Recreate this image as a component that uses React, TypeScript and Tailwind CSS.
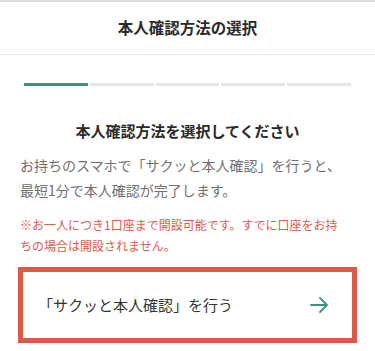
const steps = [true, false, false, false, false];

export default function App() {
  return (
    <div
      className="w-full min-h-[351px] bg-white border-t-2 border-[#dedede] text-[#333]"
      style={{ fontFamily: '"Noto Sans CJK JP", "Noto Sans", sans-serif' }}
    >
      {/* Header */}
      <header className="h-[53px] flex items-center justify-center border-b border-[#ececec]">
        <h1 className="text-[15.5px] font-bold leading-none text-[#2a2a2a]">本人確認方法の選択</h1>
      </header>

      {/* Progress */}
      <div className="px-[24px] pt-[28px] flex gap-[2px]">
        {steps.map((done, i) => (
          <div key={i} className={`flex-1 h-[3px] ${done ? "bg-[#3f8f7e]" : "bg-[#e6e6e6]"}`} />
        ))}
      </div>

      {/* Content */}
      <section className="px-5">
        <h2 className="mt-[33px] text-center text-[15px] font-bold leading-[24px] text-[#2a2a2a]">
          本人確認方法を選択してください
        </h2>
        <p className="mt-[10px] text-[14px] leading-[25px] text-[#707070]">
          お持ちのスマホで「サクッと本人確認」を行うと、
          <br />
          最短1分で本人確認が完了します。
        </p>
        <p className="mt-[11px] text-[12px] leading-[21px] text-[#e0594c]">
          ※お一人につき1口座まで開設可能です。すでに口座をお持
          <br />
          ちの場合は開設されません。
        </p>
      </section>

      <button className="mx-[18px] mt-[11px] w-[339px] h-[76px] border-[5px] border-[#dc5a48] flex items-center pl-[15px] pr-[24px] text-left">
        <span className="flex-1 text-[15px] text-[#333]">「サクッと本人確認」を行う</span>
        <svg width="18" height="16" viewBox="0 0 18 16" fill="none" stroke="#3f9280" strokeWidth="1.8" strokeLinecap="round" strokeLinejoin="round">
          <path d="M1 8h16M10 1l7 7-7 7" />
        </svg>
      </button>
    </div>
  );
}
